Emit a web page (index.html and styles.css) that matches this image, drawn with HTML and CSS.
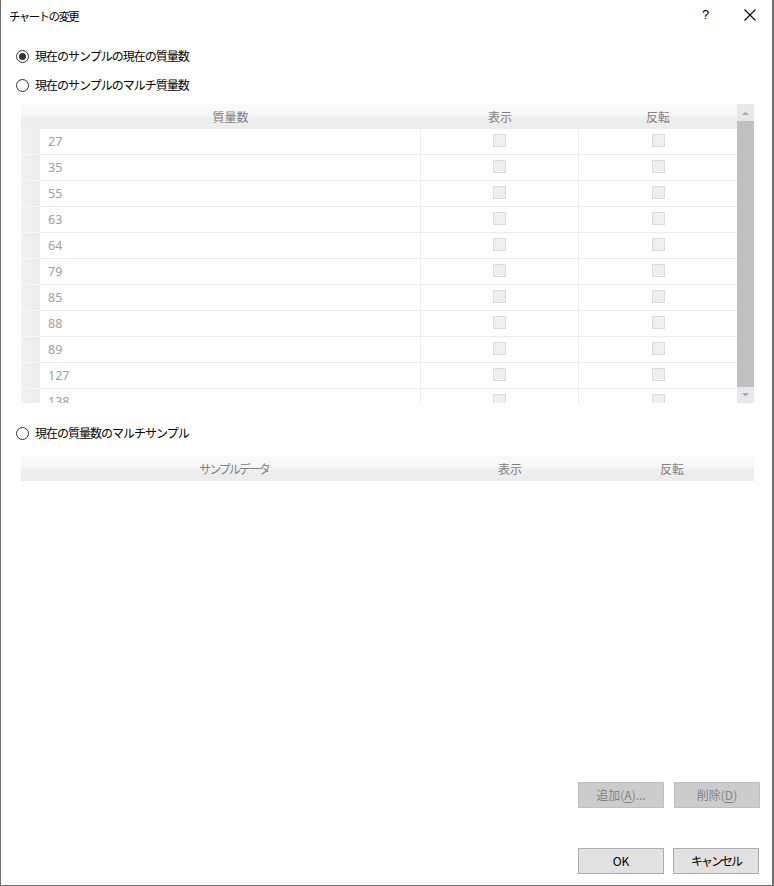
FILE: index.html
```html
<!DOCTYPE html>
<html lang="ja">
<head>
<meta charset="utf-8">
<title>チャートの変更</title>
<link rel="stylesheet" href="styles.css">
</head>
<body>
<div class="window">
  <div class="titlebar">
    <span class="title">チャートの変更</span>
    <span class="help">?</span>
    <span class="close"><svg width="12" height="12" viewBox="0 0 12 12"><path d="M0.5 0.5 L11.5 11.5 M11.5 0.5 L0.5 11.5" stroke="#000" stroke-width="1.1" fill="none"/></svg></span>
  </div>
  <div class="content">
    <label class="radio-row r1"><span class="radio checked"></span><span class="jp">現在のサンプルの現在の質量数</span></label>
    <label class="radio-row r2"><span class="radio"></span><span class="jp">現在のサンプルのマルチ質量数</span></label>

    <div class="grid1">
      <div class="gmain">
        <div class="ghead">
          <div class="hc hc-rh"></div>
          <div class="hc hc-mass">質量数</div>
          <div class="hc hc-show">表示</div>
          <div class="hc hc-inv">反転</div>
        </div>
        <div class="gbody">
          <div class="row"><div class="rh"></div><div class="c mass">27</div><div class="c chk"><span class="cb"></span></div><div class="c chk last"><span class="cb"></span></div></div>
          <div class="row"><div class="rh"></div><div class="c mass">35</div><div class="c chk"><span class="cb"></span></div><div class="c chk last"><span class="cb"></span></div></div>
          <div class="row"><div class="rh"></div><div class="c mass">55</div><div class="c chk"><span class="cb"></span></div><div class="c chk last"><span class="cb"></span></div></div>
          <div class="row"><div class="rh"></div><div class="c mass">63</div><div class="c chk"><span class="cb"></span></div><div class="c chk last"><span class="cb"></span></div></div>
          <div class="row"><div class="rh"></div><div class="c mass">64</div><div class="c chk"><span class="cb"></span></div><div class="c chk last"><span class="cb"></span></div></div>
          <div class="row"><div class="rh"></div><div class="c mass">79</div><div class="c chk"><span class="cb"></span></div><div class="c chk last"><span class="cb"></span></div></div>
          <div class="row"><div class="rh"></div><div class="c mass">85</div><div class="c chk"><span class="cb"></span></div><div class="c chk last"><span class="cb"></span></div></div>
          <div class="row"><div class="rh"></div><div class="c mass">88</div><div class="c chk"><span class="cb"></span></div><div class="c chk last"><span class="cb"></span></div></div>
          <div class="row"><div class="rh"></div><div class="c mass">89</div><div class="c chk"><span class="cb"></span></div><div class="c chk last"><span class="cb"></span></div></div>
          <div class="row"><div class="rh"></div><div class="c mass">127</div><div class="c chk"><span class="cb"></span></div><div class="c chk last"><span class="cb"></span></div></div>
          <div class="row"><div class="rh"></div><div class="c mass">138</div><div class="c chk"><span class="cb"></span></div><div class="c chk last"><span class="cb"></span></div></div>
        </div>
      </div>
      <div class="vscroll">
        <div class="sb-btn"><svg width="7" height="4" viewBox="0 0 7 4"><path d="M0 4 L3.5 0.5 L7 4 Z" fill="#a8a8ad"/></svg></div>
        <div class="sb-thumb"></div>
        <div class="sb-btn"><svg width="7" height="4" viewBox="0 0 7 4"><path d="M0 0 L7 0 L3.5 3.5 Z" fill="#a8a8ad"/></svg></div>
      </div>
    </div>

    <label class="radio-row r3"><span class="radio"></span><span class="jp">現在の質量数のマルチサンプル</span></label>

    <div class="grid2">
      <div class="hc2 c2a">サンプルデータ</div>
      <div class="hc2 c2b">表示</div>
      <div class="hc2 c2c">反転</div>
    </div>

    <div class="spacer"></div>

    <div class="btn-row top">
      <button class="btn disabled">追加(<u>A</u>)...</button>
      <button class="btn disabled">削除(<u>D</u>)</button>
    </div>
    <div class="btn-row bottom">
      <button class="btn">OK</button>
      <button class="btn kana">キャンセル</button>
    </div>
  </div>
</div>
</body>
</html>
```

FILE: styles.css
```css
* { box-sizing: border-box; }
html, body { margin: 0; padding: 0; background: #fff; }
body {
  font-family: "Noto Sans CJK JP", "Noto Sans", sans-serif;
  font-size: 12px;
  color: #000;
}
.window {
  width: 774px;
  height: 886px;
  border-left: 1px solid #707070;
  border-right: 2px solid #707070;
  border-bottom: 1px solid #707070;
  display: flex;
  flex-direction: column;
  background: #fff;
}
.titlebar {
  height: 32px;
  display: flex;
  align-items: center;
  position: relative;
  flex: none;
}
.title {
  margin-left: 8px;
  font-size: 11.5px;
  letter-spacing: -1.6px;
  line-height: 16px;
  margin-top: -1px;
}
.help {
  position: absolute;
  left: 701px;
  top: 6px;
  font-family: "Liberation Sans", sans-serif;
  font-size: 13px;
  line-height: 18px;
}
.close {
  position: absolute;
  left: 743px;
  top: 9px;
  width: 12px;
  height: 12px;
  display: block;
}
.close svg { display: block; }
.content {
  flex: 1;
  display: flex;
  flex-direction: column;
  padding-bottom: 11px;
}
.radio-row {
  display: flex;
  align-items: center;
  height: 16px;
  margin-left: 15px;
  gap: 6px;
  line-height: 16px;
}
.jp { letter-spacing: -1px; }
.r1 { margin-top: 16px; }
.r2 { margin-top: 13px; }
.r3 { margin-top: 22px; }
.radio {
  width: 13px;
  height: 13px;
  border: 1px solid #333;
  border-radius: 50%;
  background: #fff;
  display: flex;
  align-items: center;
  justify-content: center;
  flex: none;
}
.radio.checked::after {
  content: "";
  width: 7px;
  height: 7px;
  border-radius: 50%;
  background: #333;
}

.grid1 {
  margin-top: 11px;
  margin-left: 20px;
  width: 733px;
  height: 299px;
  display: flex;
  flex: none;
}
.gmain {
  width: 716px;
  display: flex;
  flex-direction: column;
}
.ghead {
  height: 25px;
  display: grid;
  grid-template-columns: 19px 381px 158px 158px;
  background: linear-gradient(#fafafa 0%, #f6f6f6 45%, #efefef 55%, #ececec 100%);
  flex: none;
}
.hc {
  color: #808080;
  text-align: center;
  line-height: 25px;
  font-size: 12px;
}
.gbody {
  height: 274px;
  overflow: hidden;
}
.row {
  display: grid;
  grid-template-columns: 19px 381px 158px 158px;
  height: 26px;
}
.rh {
  background: linear-gradient(90deg, #f2f2f2, #ececec);
  border-bottom: 1px solid #f8f8f8;
}
.c {
  border-bottom: 1px solid #ebebeb;
  border-right: 1px solid #ebebeb;
}
.c.last { border-right: none; }
.mass {
  color: #a0a0a0;
  padding-left: 8px;
  line-height: 25px;
  font-family: "Noto Sans", "Noto Sans CJK JP", sans-serif;
  font-size: 12.5px;
}
.chk {
  display: flex;
  justify-content: center;
  padding-top: 5px;
}
.cb {
  width: 13px;
  height: 13px;
  border: 1px solid #dcdcdc;
  background: #efefef;
  display: block;
}
.vscroll {
  width: 17px;
  display: flex;
  flex-direction: column;
  background: #e8e8ec;
}
.sb-btn {
  height: 17px;
  display: flex;
  align-items: center;
  justify-content: center;
  flex: none;
}
.sb-btn:last-child { height: 16px; }
.sb-thumb {
  flex: 1;
  background: #c0c0c0;
}

.grid2 {
  margin-top: 15px;
  margin-left: 20px;
  width: 733px;
  height: 25px;
  display: grid;
  grid-template-columns: 426px 126px 181px;
  background: linear-gradient(#fafafa 0%, #f6f6f6 45%, #efefef 55%, #ececec 100%);
  flex: none;
}
.hc2 {
  color: #808080;
  text-align: center;
  line-height: 25px;
}
.c2a { letter-spacing: -2px; }
.c2c { padding-left: 17px; }

.spacer { flex: 1; }

.btn-row {
  display: flex;
  margin-left: 577px;
  flex: none;
}
.btn-row.top { gap: 10px; }
.btn-row.bottom { margin-top: 40px; gap: 9px; }
.btn {
  width: 86px;
  height: 26px;
  font-family: "Noto Sans CJK JP", "Noto Sans", sans-serif;
  font-size: 12px;
  line-height: 16px;
  padding: 0;
  border: 1px solid #adadad;
  background: #e1e1e1;
  color: #000;
  border-radius: 0;
}
.btn.kana { letter-spacing: -2px; }
.btn.disabled {
  background: #cccccc;
  border-color: #bfbfbf;
  color: #838383;
}
.btn u { text-underline-offset: 2px; }
```
